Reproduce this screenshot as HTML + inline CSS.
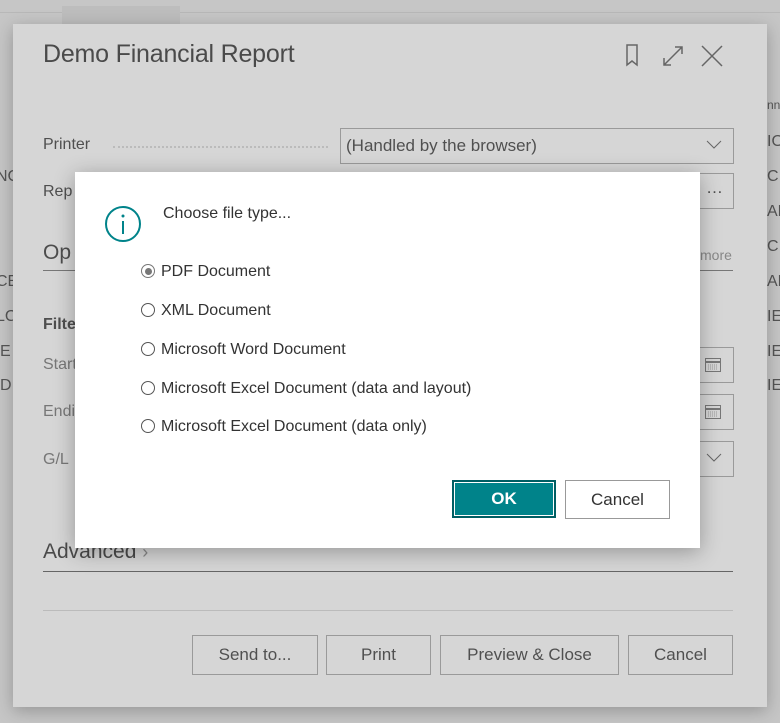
<!DOCTYPE html>
<html><head><meta charset="utf-8"><style>
body{margin:0;width:780px;height:723px;background:#c6c6c6;font-family:"Segoe UI","Liberation Sans",sans-serif;position:relative;overflow:hidden;color:#4d4d4d}
.a{position:absolute}
.outer{left:13px;top:24px;width:754px;height:683px;background:#d6d6d6;box-shadow:0 4px 16px rgba(0,0,0,.25)}
.lbl{font-size:16px;color:#4f4f4f}
.box{border:1px solid #9a9a9a;background:#d6d6d6}
.btn{border:1px solid #9a9a9a;background:#d6d6d6;height:38px;line-height:38px;text-align:center;font-size:17px;color:#505050;top:635px}
.dlg{left:75px;top:172px;width:625px;height:376px;background:#fff;box-shadow:0 4px 20px rgba(0,0,0,.3)}
.opt{left:66px;font-size:16px;color:#333}
.opt i{display:inline-block;width:14px;height:14px;border:1px solid #555;border-radius:50%;vertical-align:-2px;margin-right:6px;box-sizing:border-box;position:relative}
.ed{font-size:16px;color:#555}
</style></head><body>
<div class="a" style="left:0;top:12px;width:780px;height:1px;background:#b8b8b8"></div>
<div class="a" style="left:62px;top:6px;width:118px;height:18px;background:#bdbdbd"></div>
<div class="a ed" style="left:-4px;top:168px">NC</div>
<div class="a ed" style="left:-4px;top:273px">CE</div>
<div class="a ed" style="left:-4px;top:308px">LC</div>
<div class="a ed" style="left:0;top:343px">E</div>
<div class="a ed" style="left:0;top:377px">D</div>
<div class="a ed" style="left:767px;top:98px;font-size:12px">nn</div>
<div class="a ed" style="left:767px;top:133px">IO</div>
<div class="a ed" style="left:767px;top:168px">C</div>
<div class="a ed" style="left:767px;top:203px">AL</div>
<div class="a ed" style="left:767px;top:238px">C</div>
<div class="a ed" style="left:767px;top:273px">AL</div>
<div class="a ed" style="left:767px;top:308px">IET</div>
<div class="a ed" style="left:767px;top:343px">IET</div>
<div class="a ed" style="left:767px;top:377px">IET</div>
<div class="a outer"></div>
<div class="a" style="left:43px;top:40px;font-size:25px;color:#4a4a4a;letter-spacing:-0.2px">Demo Financial Report</div>
<svg class="a" style="left:620px;top:42px" width="110" height="28" viewBox="0 0 110 28" fill="none" stroke="#666" stroke-width="1.5"><path d="M7 3h10v20l-5-4-5 4z"/><path d="M44 23L62 5M55 5h7v7M44 16v7h7"/><path d="M82 4l20 20M102 4L82 24"/></svg>
<div class="a lbl" style="left:43px;top:136px">Printer</div>
<div class="a" style="left:113px;top:146px;width:215px;border-top:2px dotted #bbb"></div>
<div class="a box" style="left:340px;top:128px;width:392px;height:34px"></div>
<div class="a" style="left:346px;top:136px;font-size:17px;color:#505050">(Handled by the browser)</div>
<svg class="a" style="left:706px;top:140px" width="16" height="10"><path d="M1 1l7 7 7-7" stroke="#666" fill="none"/></svg>
<div class="a lbl" style="left:43px;top:183px">Rep</div>
<div class="a box" style="left:690px;top:173px;width:42px;height:34px"></div>
<div class="a" style="left:706px;top:178px;font-size:17px">…</div>
<div class="a" style="left:43px;top:241px;font-size:21px">Op</div>
<div class="a" style="left:700px;top:247px;font-size:14px;color:#888">more</div>
<div class="a" style="left:43px;top:270px;width:690px;height:1px;background:#777"></div>
<div class="a lbl" style="left:43px;top:316px;font-weight:bold">Filte</div>
<div class="a lbl" style="left:43px;top:356px;color:#777">Start</div>
<div class="a lbl" style="left:43px;top:403px;color:#777">Endi</div>
<div class="a lbl" style="left:43px;top:451px;color:#777">G/L</div>
<div class="a box" style="left:690px;top:347px;width:42px;height:34px"></div>
<div class="a box" style="left:690px;top:394px;width:42px;height:34px"></div>
<div class="a box" style="left:690px;top:441px;width:42px;height:34px"></div>
<svg class="a" style="left:704px;top:355px" width="18" height="18"><rect x="1.5" y="3.5" width="15" height="13" fill="none" stroke="#777"/><path d="M1 7h16" stroke="#777" stroke-width="2"/><path d="M4 10h10M4 12h10M4 14h10" stroke="#999" stroke-dasharray="1 1"/></svg>
<svg class="a" style="left:704px;top:402px" width="18" height="18"><rect x="1.5" y="3.5" width="15" height="13" fill="none" stroke="#777"/><path d="M1 7h16" stroke="#777" stroke-width="2"/><path d="M4 10h10M4 12h10M4 14h10" stroke="#999" stroke-dasharray="1 1"/></svg>
<svg class="a" style="left:706px;top:453px" width="16" height="10"><path d="M1 1l7 7 7-7" stroke="#666" fill="none"/></svg>
<div class="a" style="left:43px;top:540px;font-size:21px;color:#4a4a4a">Advanced <span style="font-size:18px;color:#888">›</span></div>
<div class="a" style="left:43px;top:571px;width:690px;height:1px;background:#666"></div>
<div class="a" style="left:43px;top:610px;width:690px;height:1px;background:#bbb"></div>
<div class="a btn" style="left:192px;width:124px">Send to...</div>
<div class="a btn" style="left:326px;width:103px">Print</div>
<div class="a btn" style="left:440px;width:177px">Preview &amp; Close</div>
<div class="a btn" style="left:628px;width:103px">Cancel</div>
<div class="a dlg">
<svg class="a" style="left:29px;top:33px" width="38" height="38"><circle cx="19" cy="19" r="17" fill="none" stroke="#00838a" stroke-width="2"/><circle cx="19" cy="11" r="1.5" fill="#00838a"/><path d="M19 16v13" stroke="#00838a" stroke-width="2"/></svg>
<div class="a" style="left:88px;top:33px;font-size:16px;color:#333">Choose file type...</div>
<div class="a opt" style="top:91px"><i style="border-color:#777"><b style="position:absolute;left:2.5px;top:2.5px;width:7px;height:7px;border-radius:50%;background:#777"></b></i>PDF Document</div>
<div class="a opt" style="top:130px"><i></i>XML Document</div>
<div class="a opt" style="top:169px"><i></i>Microsoft Word Document</div>
<div class="a opt" style="top:208px"><i></i>Microsoft Excel Document (data and layout)</div>
<div class="a opt" style="top:246px"><i></i>Microsoft Excel Document (data only)</div>
<div class="a" style="left:377px;top:308px;width:100px;height:34px;background:#00838a;border:2px solid #005e63;box-shadow:inset 0 0 0 1px #fff;color:#fff;font-weight:bold;font-size:17px;line-height:34px;text-align:center">OK</div>
<div class="a" style="left:490px;top:308px;width:103px;height:37px;border:1px solid #999;color:#333;font-size:17px;line-height:37px;text-align:center">Cancel</div>
</div>
</body></html>
